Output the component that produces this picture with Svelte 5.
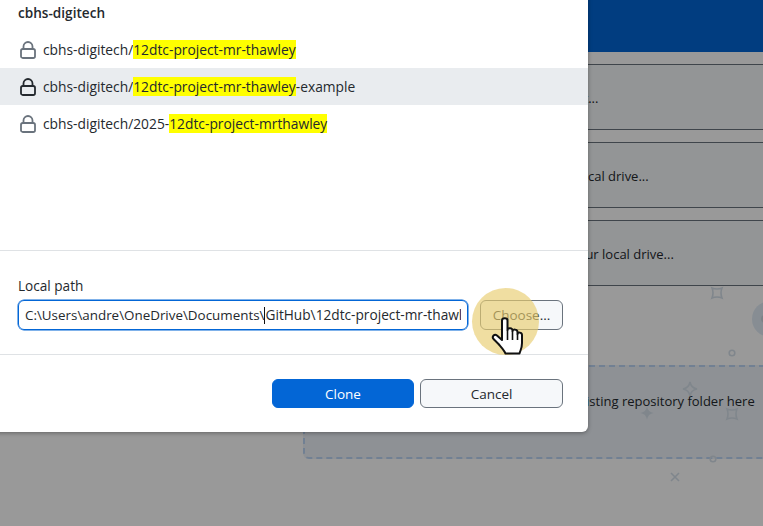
<script>
	const repos = [
		{ pre: 'cbhs-digitech/', hit: '12dtc-project-mr-thawley', post: '', selected: false },
		{ pre: 'cbhs-digitech/', hit: '12dtc-project-mr-thawley', post: '-example', selected: true },
		{ pre: 'cbhs-digitech/2025-', hit: '12dtc-project-mrthawley', post: '', selected: false }
	];
	const actions = [
		'Clone a repository from the Internet...',
		'Create a New Repository on your local drive...',
		'Add an Existing Repository from your local drive...'
	];
</script>

<div class="page">
	<header class="topbar"></header>
	<div class="welcome">
		{#each actions as action}
			<div class="action">{action}</div>
		{/each}
	</div>
	<div class="dropzone">
		<span>Drag an existing repository folder here</span>
	</div>

	<div class="avatar"></div>
	<svg class="sparkles" width="763" height="526" viewBox="0 0 763 526" fill="none" stroke-width="1.6">
		<path d="M712 288q5 2 10 0q-2 5 0 10q-5-2-10 0q2-5 0-10z" />
		<circle cx="732" cy="353" r="2.8" />
		<path d="M690 382q1 6 7 7q-6 1-7 7q-1-6-7-7q6-1 7-7z" />
		<path class="solid" d="M647 409q1 3 4 4q-3 1-4 4q-1-3-4-4q3-1 4-4z" />
		<path d="M727 409q5 2 10 0q-2 5 0 10q-5-2-10 0q2-5 0-10z" />
		<circle cx="713" cy="459" r="2.8" />
		<path d="M671 473l8 8M679 473l-8 8" />
	</svg>

	<div class="overlay"></div>

	<div class="dialog">
		<h2 class="org">cbhs-digitech</h2>
		<ul class="repos">
			{#each repos as repo}
				<li class="repo" class:selected={repo.selected}>
					<svg class="lock" width="16" height="18" viewBox="0 0 16 18" fill="none" stroke="currentColor" stroke-width="1.8">
						<path d="M3.500 8V5.500a4.500 4.500 0 0 1 9 0V8" />
						<rect x="1" y="8" width="14" height="9" rx="1.800" />
					</svg>
					<span class="name">{repo.pre}<mark>{repo.hit}</mark>{repo.post}</span>
				</li>
			{/each}
		</ul>

		<div class="path-row">
			<div class="path-field">
				<label for="path">Local path</label>
				<div class="input" id="path">
					<div class="value">C:\Users\andre\OneDrive\Documents\<i class="caret"></i><span class="rest">GitHub\12dtc-project-mr-thawley</span></div>
				</div>
			</div>
			<button class="btn choose">Choose...</button>
		</div>

		<footer class="actions">
			<button class="btn primary">Clone</button>
			<button class="btn">Cancel</button>
		</footer>
	</div>

	<div class="halo"></div>
	<svg class="hand" width="34" height="40" viewBox="0 0 34 40">
		<path d="M12 4.500C12 1.500 17.500 1.500 17.500 4.500V14C17.500 11.500 22.500 11.500 22.500 14.500V15C22.500 13 27.500 13 27.500 16V18C27.500 16 32 16 32 19V27C32 32 30.500 34 29.500 37.500H15.500C14 34 11 31 8.500 28L3.500 23C1.500 20.500 4.500 17.500 7 19.500L12 24Z" fill="#fff" stroke="#111" stroke-width="2" stroke-linejoin="round" />
		<path d="M17.500 14V24M22.500 15V24M27.500 18V24" stroke="#111" stroke-width="1.600" fill="none" />
	</svg>
</div>

<style>
	:global(body) {
		margin: 0;
	}

	.page {
		position: relative;
		width: 763px;
		height: 526px;
		overflow: hidden;
		background: #fff;
		font-family: 'Open Sans', 'Noto Sans', sans-serif;
		font-size: 13.5px;
		color: #24292e;
	}

	.topbar {
		height: 52px;
		background: #0366d6;
	}

	.welcome {
		display: flex;
		flex-direction: column;
		gap: 12px;
		margin: 12px 0 0 200px;
	}

	.action {
		height: 64px;
		border: 1px solid #6a737d;
		border-right: none;
		background: #f6f8fa;
		padding-left: 173px;
		line-height: 66px;
		font-size: 13px;
	}

	.action:first-child {
		letter-spacing: -0.13px;
	}

	.dropzone {
		box-sizing: border-box;
		height: 94px;
		width: 520px;
		margin: 79px 0 0 303px;
		border: 2px dashed #bcd6f5;
		border-radius: 6px;
		background: #edf2f8;
		padding-left: 216px;
		line-height: 68px;
		font-size: 13px;
		white-space: nowrap;
	}

	.avatar {
		position: absolute;
		left: 752px;
		top: 301px;
		width: 36px;
		height: 36px;
		border-radius: 50%;
		background: #e1ecf6;
	}

	.avatar::after {
		content: '';
		position: absolute;
		left: 9px;
		top: 14px;
		width: 8px;
		height: 8px;
		border-radius: 50%;
		background: #cfd8e0;
	}

	.sparkles {
		position: absolute;
		left: 0;
		top: 0;
		stroke: #d5e0ea;
	}

	.sparkles .solid {
		fill: #d5e0ea;
	}

	.overlay {
		position: absolute;
		inset: 0;
		background: rgba(0, 0, 0, 0.4);
	}

	.dialog {
		position: absolute;
		left: -10px;
		top: -10px;
		width: 598px;
		height: 442px;
		box-sizing: border-box;
		padding-left: 10px;
		display: flex;
		flex-direction: column;
		background: #fff;
		border-radius: 6px;
		box-shadow: 0 1px 4px rgba(0, 0, 0, 0.35);
	}

	.org {
		margin: 0;
		padding: 15px 0 0 18px;
		height: 33px;
		box-sizing: border-box;
		font-size: 13.6px;
		font-weight: 600;
		line-height: 16px;
	}

	.repos {
		list-style: none;
		margin: 8px 0 0;
		padding: 0;
		height: 219px;
		border-bottom: 1px solid #dfe2e5;
	}

	.repo {
		display: flex;
		align-items: center;
		gap: 7px;
		height: 37px;
		padding-left: 20px;
		font-size: 13.8px;
	}

	.repo .lock {
		color: #6a737d;
		flex: none;
	}

	.repo.selected {
		background: #e9ecef;
	}

	.repo.selected .lock {
		color: #24292e;
	}

	mark {
		background: #ffff00;
		color: inherit;
		display: inline-block;
		line-height: 19px;
	}

	.path-row {
		display: flex;
		align-items: flex-end;
		gap: 12px;
		padding: 27px 25px 24px 18px;
		border-bottom: 1px solid #dfe2e5;
	}

	.path-field {
		flex: 1;
		display: flex;
		flex-direction: column;
		gap: 6px;
	}

	label {
		font-size: 13.6px;
		line-height: 16px;
	}

	.input {
		box-sizing: border-box;
		height: 30px;
		width: 450px;
		border: 1px solid #0366d6;
		border-radius: 6px;
		padding: 0 6px;
		line-height: 28px;
		box-shadow: 0 0 0 0.5px #0366d6;
	}

	.value {
		white-space: nowrap;
		overflow: hidden;
		font-size: 13.4px;
	}

	.rest {
		font-size: 13.7px;
	}

	.caret {
		display: inline-block;
		width: 1px;
		height: 17px;
		background: #111;
		vertical-align: -4px;
	}

	.btn {
		box-sizing: border-box;
		width: 143px;
		height: 29px;
		border: 1px solid #6a737d;
		border-radius: 6px;
		background: #f6f8fa;
		color: #24292e;
		font: inherit;
		padding: 0;
	}

	.choose {
		width: 83px;
		height: 30px;
	}

	.actions {
		display: flex;
		justify-content: flex-end;
		gap: 6px;
		padding: 24px 25px 0 0;
	}

	.primary {
		width: 142px;
		background: #0366d6;
		border-color: #0366d6;
		color: #fff;
		font-weight: 500;
	}

	.halo {
		position: absolute;
		left: 472px;
		top: 288px;
		width: 67px;
		height: 67px;
		border-radius: 50%;
		background: rgba(232, 204, 110, 0.65);
	}

	.hand {
		position: absolute;
		left: 490px;
		top: 316px;
	}
</style>
